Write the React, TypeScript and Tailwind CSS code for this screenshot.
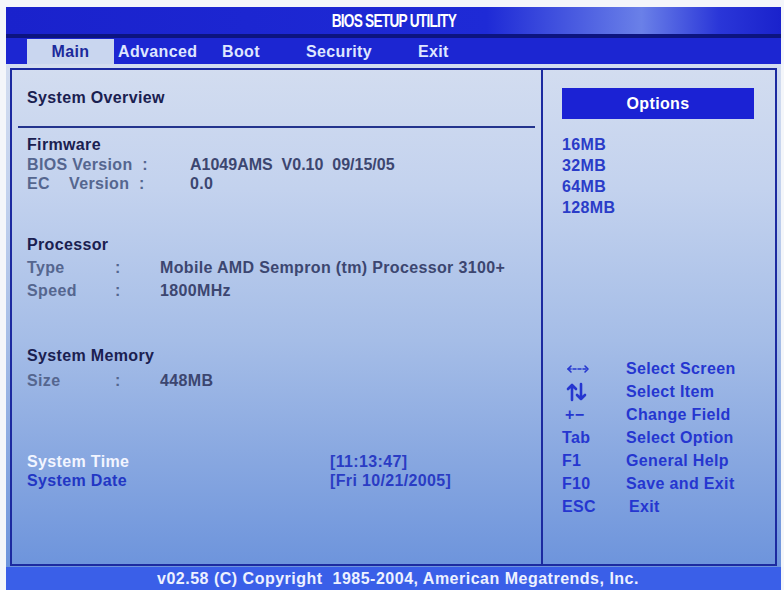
import React from "react"

const tabs = [
	{ label: "Advanced", w: "w-[104px]" },
	{ label: "Boot", w: "w-[84px]" },
	{ label: "Security", w: "w-[112px]" },
	{ label: "Exit", w: "w-[60px]" },
]

const LeftRight = () => (
	<svg width="24" height="10" viewBox="0 0 24 10" fill="none" stroke="currentColor" strokeWidth="1.6" strokeLinecap="round" strokeLinejoin="round">
		<path d="M2 5h20" strokeDasharray="3 2" />
		<path d="M5 2 2 5l3 3M19 2l3 3-3 3" />
	</svg>
)

const UpDown = () => (
	<svg width="22" height="20" viewBox="0 0 22 20" fill="none" stroke="currentColor" strokeWidth="2.6" strokeLinecap="round" strokeLinejoin="round">
		<path d="M6 18V3M2 7l4-4 4 4" />
		<path d="M15 2v15M11 13l4 4 4-4" />
	</svg>
)

const helpRows: { key: React.ReactNode; text: string; keyCls: string }[] = [
	{ key: <LeftRight />, text: "Select Screen", keyCls: "pl-[4px]" },
	{ key: <UpDown />, text: "Select Item", keyCls: "pl-[4px]" },
	{ key: "+−", text: "Change Field", keyCls: "text-[16px] pl-[3px]" },
	{ key: "Tab", text: "Select Option", keyCls: "" },
	{ key: "F1", text: "General Help", keyCls: "" },
	{ key: "F10", text: "Save and Exit", keyCls: "" },
	{ key: "ESC", text: "Exit", keyCls: "" },
]

const InfoRow = ({ label, colon, value, top }: { label: string; colon: string; value: string; top: string }) => (
	<div className={`flex h-[19px] items-center ${top}`}>
		<span className="w-[88px] text-[#55668f]">{label}</span>
		<span className="w-[45px] text-[#55668f]">{colon}</span>
		<span className="text-[#3c4670] whitespace-pre">{value}</span>
	</div>
)

export default function App() {
	return (
		<div className="w-[784px] h-[590px] bg-[#f4f6fa] pl-[6px] pt-[7px] pr-[3px] flex flex-col font-['Liberation_Sans',Arial,sans-serif] font-bold text-[16px] tracking-[0.35px] leading-[18px] overflow-hidden">
			{/* title */}
			<div className="h-[27px] flex items-center justify-center bg-[linear-gradient(90deg,#1a22cc_0%,#1e2ad6_62%,#6a80e8_82%,#2a36d8_92%,#1a22cc_100%)]">
				<span className="inline-block text-white text-[18px] tracking-[-1px] scale-x-[0.76]">
					BIOS SETUP UTILITY
				</span>
			</div>
			<div className="h-[4px] bg-[#0c1480]" />
			{/* tabs */}
			<div className="h-[26px] bg-[#1c26d2] flex items-end pl-[21px]">
				<div className="w-[87px] h-[25px] bg-[#c9d6ef] flex items-center justify-center text-[#1c2a9c]">
					Main
				</div>
				<div className="w-[4px]" />
				{tabs.map((t) => (
					<div key={t.label} className={`${t.w} h-[25px] flex items-center text-[#dfe6ff]`}>
						{t.label}
					</div>
				))}
			</div>
			{/* body */}
			<div className="flex-1 px-[4px] pt-[4px] pb-[1px] bg-[linear-gradient(180deg,#d3ddf0_0%,#c3d2ee_25%,#a5bde7_55%,#86a6e0_80%,#6d94dc_100%)]">
				<div className="h-full border-2 border-[#1c2aa0] flex">
					{/* left panel */}
					<div className="w-[531px] border-r-2 border-[#1c2aa0] flex flex-col">
						<div className="pl-[15px] pt-[19px] h-[56px] text-[#1a2050]">System Overview</div>
						<div className="mx-[6px] h-[2px] bg-[#23348e]" />
						<div className="pl-[15px] flex flex-col">
							<div className="mt-[8px] h-[19px] text-[#1a2050]">Firmware</div>
							<div className="flex h-[19px] items-center">
								<span className="w-[123px] text-[#55668f] whitespace-pre">BIOS Version  :</span>
								<span className="ml-[40px] text-[#3c4670] whitespace-pre tracking-normal">A1049AMS  V0.10  09/15/05</span>
							</div>
							<div className="flex h-[19px] items-center">
								<span className="w-[123px] text-[#55668f] whitespace-pre">EC    Version  :</span>
								<span className="ml-[40px] text-[#3c4670]">0.0</span>
							</div>
							<div className="mt-[43px] h-[19px] text-[#1a2050]">Processor</div>
							<InfoRow label="Type" colon=":" value="Mobile AMD Sempron (tm) Processor 3100+" top="mt-[3px]" />
							<InfoRow label="Speed" colon=":" value="1800MHz" top="mt-[4px]" />
							<div className="mt-[47px] h-[19px] text-[#1a2050]">System Memory</div>
							<InfoRow label="Size" colon=":" value="448MB" top="mt-[5px]" />
							<div className="mt-[62px] flex h-[19px] items-center">
								<span className="w-[303px] text-[#f2f5ff]">System Time</span>
								<span className="text-[#2a3cc4]">[11:13:47]</span>
							</div>
							<div className="flex h-[19px] items-center">
								<span className="w-[303px] text-[#2236c4]">System Date</span>
								<span className="text-[#2a3cc4]">[Fri 10/21/2005]</span>
							</div>
						</div>
					</div>
					{/* right panel */}
					<div className="flex-1 flex flex-col pl-[19px]">
						<div className="mt-[18px] w-[192px] h-[31px] bg-[#1b22d4] flex items-center justify-center text-white">
							Options
						</div>
						<div className="mt-[15px] flex flex-col text-[#2a3cc8]">
							{["16MB", "32MB", "64MB", "128MB"].map((o) => (
								<div key={o} className="h-[21px] flex items-center">
									{o}
								</div>
							))}
						</div>
						<div className="mt-[139px] flex flex-col text-[#2536d0]">
							{helpRows.map((r) => (
								<div key={r.text} className="h-[23px] flex items-center">
									<span className={`w-[64px] flex items-center ${r.keyCls}`}>{r.key}</span>
									<span className={r.text === "Exit" ? "pl-[3px]" : ""}>{r.text}</span>
								</div>
							))}
						</div>
					</div>
				</div>
			</div>
			{/* footer */}
			<div className="h-[23px] bg-[#3a5fe8] flex items-center justify-center pl-[9px] text-[#edf1ff] whitespace-pre tracking-[0.5px]">
				v02.58 (C) Copyright  1985-2004, American Megatrends, Inc.
			</div>
		</div>
	)
}
